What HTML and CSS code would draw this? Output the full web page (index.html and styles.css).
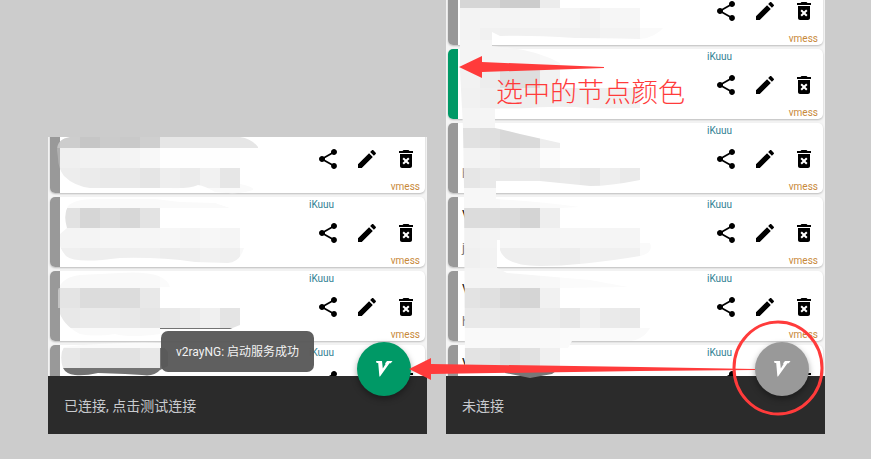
FILE: index.html
```html
<!DOCTYPE html>
<html lang="zh-CN">
<head>
<meta charset="utf-8">
<title>v2rayNG</title>
<link rel="stylesheet" href="styles.css">
</head>
<body>
<svg class="defs" aria-hidden="true">
  <symbol id="share" viewBox="0 0 24 24"><path d="M18 16.08c-.76 0-1.44.3-1.96.77L8.91 12.7c.05-.23.09-.46.09-.7s-.04-.47-.09-.7l7.05-4.11c.54.5 1.25.81 2.04.81 1.66 0 3-1.34 3-3s-1.34-3-3-3-3 1.34-3 3c0 .24.04.47.09.7L8.04 9.81C7.5 9.31 6.79 9 6 9c-1.66 0-3 1.34-3 3s1.34 3 3 3c.79 0 1.5-.31 2.04-.81l7.12 4.16c-.05.21-.08.43-.08.65 0 1.61 1.31 2.92 2.92 2.92s2.92-1.31 2.92-2.92-1.31-2.92-2.92-2.92z"/></symbol>
  <symbol id="edit" viewBox="0 0 24 24"><path d="M3 17.25V21h3.75L17.81 9.94l-3.75-3.75L3 17.25zM20.71 7.04c.39-.39.39-1.02 0-1.41l-2.34-2.34c-.39-.39-1.02-.39-1.41 0l-1.83 1.83 3.75 3.75 1.83-1.83z"/></symbol>
  <symbol id="delete" viewBox="0 0 24 24"><path d="M6 19c0 1.1.9 2 2 2h8c1.1 0 2-.9 2-2V7H6v12zm2.46-7.12l1.41-1.41L12 12.59l2.12-2.12 1.41 1.41L13.41 14l2.12 2.12-1.41 1.41L12 15.41l-2.12 2.12-1.41-1.41L10.59 14l-2.13-2.12zM15.5 4l-1-1h-5l-1 1H5v2h14V4z"/></symbol>
  <symbol id="logo" viewBox="0 0 54 54"><path fill="#fff" d="M19 19h6l.8 7.5L28.6 22l-.6-.6 2-2.4h5.5l-1.7 2.2h-1.3L23 34.5h-.6L21.2 21H19.6z"/></symbol>
</svg>
<main class="board">
  <section class="phone phone-short">
    <div class="list" id="connected"></div>
    <footer class="status">已连接, 点击测试连接</footer>
    <div class="toast" role="status">v2rayNG: 启动服务成功</div>
    <button class="fab fab-on" aria-label="断开"><svg><use href="#logo"/></svg></button>
  </section>
  <section class="phone">
    <div class="list" id="idle"></div>
    <footer class="status">未连接</footer>
    <button class="fab" aria-label="连接"><svg><use href="#logo"/></svg></button>
  </section>
</main>
<svg class="overlay mosaic" id="mosaic" width="871" height="459" aria-hidden="true"></svg>
<svg class="overlay marks" width="871" height="459" aria-hidden="true">
  <path d="M459 67L482 56V62L604 67V68L482 72V78z"/>
  <path d="M409 369L431 358V364L640 367L755 369V370L640 371L431 374V380z"/>
  <ellipse cx="778" cy="368" rx="44" ry="46"/>
</svg>
<p class="note">选中的节点颜色</p>
<script src="app.js"></script>
</body>
</html>
```
FILE: styles.css
```css
* { box-sizing: border-box; }
body {
  margin: 0;
  background: #ccc;
  font-family: Roboto, "Noto Sans CJK SC", sans-serif;
}
.defs { display: none; }
.board {
  display: grid;
  grid-template-columns: 1fr 1fr;
  gap: 19px;
  height: 100vh;
  padding: 0 46px 25px 48px;
}
.phone {
  position: relative;
  display: flex;
  flex-direction: column;
  min-height: 0;
}
.phone-short { margin-top: 137px; }
.list {
  flex: 1;
  min-height: 0;
  display: flex;
  flex-direction: column;
  justify-content: flex-end;
  gap: 4px;
  padding: 0 2px;
  overflow: hidden;
  background: #f5f5f5;
}
.card {
  flex: none;
  display: grid;
  grid-template-columns: 10px 1fr auto;
  height: 70px;
  overflow: hidden;
  border-radius: 5px;
  background: #fff;
  box-shadow: 0 1px 2px #bbb;
}
.card:last-child { height: 31px; border-radius: 5px 5px 0 0; }
.bar { background: #999; }
.selected .bar { background: #096; }
.name {
  padding: 9px 4px;
  font-size: 14px;
  line-height: 20px;
  color: #222;
}
.name small {
  display: block;
  padding-top: 12px;
  font-size: 13px;
  color: #777;
}
.side {
  display: grid;
  grid-template-rows: 12px 1fr 12px;
  align-items: center;
  height: 70px;
  padding: 2px 5px 0 0;
  font-size: 10px;
  line-height: 12px;
}
.group { color: #2f7f93; }
.type { color: #c8893a; text-align: right; }
.actions { display: flex; gap: 15px; padding: 0 2px 0 7px; }
.actions button {
  width: 24px;
  height: 24px;
  padding: 0;
  border: 0;
  background: none;
}
.actions svg { display: block; width: 24px; height: 24px; }
.status {
  height: 58px;
  padding: 0 16px;
  background: #2b2b2b;
  color: #c8cace;
  font-size: 14px;
  line-height: 60px;
}
.toast {
  position: absolute;
  z-index: 2;
  left: 113px;
  bottom: 62px;
  width: 153px;
  height: 41px;
  border-radius: 7px;
  background: rgba(88, 88, 88, .96);
  color: #f2f2f2;
  font-size: 12px;
  line-height: 43px;
  text-align: center;
  white-space: nowrap;
}
.fab {
  position: absolute;
  z-index: 2;
  right: 16px;
  bottom: 38px;
  width: 54px;
  height: 54px;
  padding: 0;
  border: 0;
  border-radius: 50%;
  background: #999;
  box-shadow: 0 3px 6px rgba(0, 0, 0, .35);
}
.fab-on { background: #096; }
.fab svg { display: block; width: 54px; height: 54px; }
.overlay {
  position: absolute;
  top: 0;
  left: 0;
  pointer-events: none;
}
.mosaic { z-index: 1; }
.marks { z-index: 3; fill: #ff3b3b; }
.marks ellipse { fill: none; stroke: #ff3b3b; stroke-width: 3; }
.note {
  position: absolute;
  z-index: 3;
  left: 496px;
  top: 73px;
  margin: 0;
  color: #ff3b3b;
  font-family: "Noto Sans CJK SC", sans-serif;
  font-size: 27px;
  font-weight: 300;
  line-height: 36px;
}
```
FILE: app.js
```js
const icon = (id, label) =>
  `<button aria-label="${label}"><svg><use href="#${id}"/></svg></button>`;

const card = ({ name = "", host = "", group = "iKuuu", type = "vmess", selected = false }) => `
  <article class="card${selected ? " selected" : ""}">
    <div class="bar"></div>
    <div class="name">${name || "&nbsp;"}<small>${host}</small></div>
    <div class="side">
      <span class="group">${group}</span>
      <div class="actions">${icon("share", "分享")}${icon("edit", "编辑")}${icon("delete", "删除")}</div>
      <span class="type">${type}</span>
    </div>
  </article>`;

document.getElementById("connected").innerHTML =
  [{ group: "" }, {}, {}, { type: "" }].map(card).join("");
document.getElementById("idle").innerHTML = [
  { group: "" },
  { selected: true },
  { host: "h" },
  { name: "V", host: "j" },
  { name: "V", host: "h" },
  { name: "V", type: "" },
].map(card).join("");

// Each patch: an outline, then rows of 20px cells as [y, height, x, grey levels].
const patches = [
  ["M57 150Q57 139 70 137L240 137Q252 139 258 147L258 148H240V184Q255 187 253 190Q240 195 215 192Q205 186 198 185Q188 189 170 188H90Q74 186 64 176Q58 168 58 158z", [
    [137, 11, 40, "c4 cd c6 cb c9 cf e6 e6 e6 e6 e6"],
    [148, 20, 40, "b0 f0 f2 f2 f4 f8 fe fe fe fe fe"],
    [168, 20, 40, "b0 ed eb e9 e9 e5 ee eb f1 e6 fa"],
    [188, 8, 60, "fa fa fa fa fa fa fa fa fa fa"]]],
  ["M68 206Q75 199 95 199L155 199L180 202L215 203L230 208H160V228H240V248H244Q240 262 228 263L195 262Q160 257 120 258Q75 264 66 256Q56 244 60 234L67 228Q63 215 68 206z", [
    [198, 10, 60, "fa fa fa fa fa fa fa fa fa"],
    [208, 20, 60, "e2 d6 dc d7 e3"],
    [228, 20, 60, "f4 f4 f6 f6 f6 f7 f5 f7 f5"],
    [248, 20, 60, "ef ed ee ef f0 ed ee f1 ef f8"]]],
  ["M58 290Q62 277 80 275L120 273Q165 270 170 287H160V308H240V325L230 329H160V334Q130 338 115 334Q95 337 80 334Q62 325 58 308z", [
    [268, 20, 60, "f8 f9 f9 f9 f9 fb"],
    [288, 20, 40, "c4 e4 dc dc dc e8"],
    [308, 20, 60, "e8 ea ea e8 e5 e9 ec f0 e4"],
    [328, 12, 60, "f9 fa fa fa fa 73 73 73 73"]]],
  ["M64 347Q110 342 160 343L168 352V366L160 370Q154 377 142 375L125 374L98 373Q85 376 75 375Q66 374 63 368Q59 355 64 347z", [
    [340, 8, 60, "fa fa fa fa fa fa"],
    [348, 20, 60, "e7 e2 e2 e2 e8 76"],
    [368, 9, 60, "72 72 72 72 72 72"]]],
  ["M460 0H560V8H640V28L665 26Q655 38 640 39Q600 38 575 38Q530 35 500 36L492 32V46L500 47Q535 49 560 63V88H640V108Q600 110 575 107Q545 106 520 109H495V128L520 134L560 143V168H640V180Q610 186 590 186L540 181H496V199Q545 202 580 207L560 208V228H640V243H650Q654 253 640 256Q580 266 540 266Q505 266 500 250V240H497V268L507 273L590 280L628 287L560 288V308H640V328H650Q642 342 625 341H572L568 348H560V368L552 374L530 378L505 373V368H465L464 188L463 128L460 70z", [
    [0, 8, 460, "d6 d6 cd cc ec"],
    [8, 20, 460, "f3 f4 f4 f5 f6 f5 f2 f6 f6"],
    [28, 12, 460, "f3 f1 f0 f1 f2 f1 f0 f3 f3 fa fa"],
    [40, 28, 460, "f4 f5 f5 f6 f8"],
    [68, 20, 460, "f2 ed e0 de f2"],
    [88, 20, 460, "f1 ef f0 ee f0 ef f1 f0 f1"],
    [108, 20, 460, "f4 f5 fa fa fa fa fa fa fa"],
    [128, 20, 460, "e1 df d8 da ed"],
    [148, 20, 460, "f3 f3 f0 f2 fb fe fe fe fe"],
    [168, 20, 460, "e6 e9 ea ea e8 ea e7 ee ea"],
    [188, 20, 460, "f7 f7 fa fa fb fb"],
    [208, 20, 460, "dc dc da d4 ee"],
    [228, 20, 460, "f2 f3 f6 f5 f5 f6 f6 f5 f5 fa"],
    [248, 20, 460, "f0 f2 ee ee ef ed f1 f0 f0 fa"],
    [268, 20, 460, "f4 f4 f5 f6 f8 fb fb fb fb"],
    [288, 20, 460, "e3 e0 d8 d5 f1"],
    [308, 20, 460, "e9 ea e8 e9 eb e7 f0 ea e8"],
    [328, 20, 460, "f9 f9 f9 f9 f9 fa fa fa fa fa"],
    [348, 20, 460, "e3 e3 dd e1 f0"],
    [368, 10, 500, "77 77 77"]]],
];

document.getElementById("mosaic").innerHTML = patches.map(([outline, rows], i) => `
  <clipPath id="patch${i}"><path d="${outline}"/></clipPath>
  <g clip-path="url(#patch${i})" shape-rendering="crispEdges">${rows.map(([y, h, x, levels]) =>
    levels.split(" ").map((v, n) =>
      `<rect x="${x + n * 20}" y="${y}" width="20" height="${h}" fill="#${v}${v}${v}"/>`).join("")).join("")}
  </g>`).join("");
```
